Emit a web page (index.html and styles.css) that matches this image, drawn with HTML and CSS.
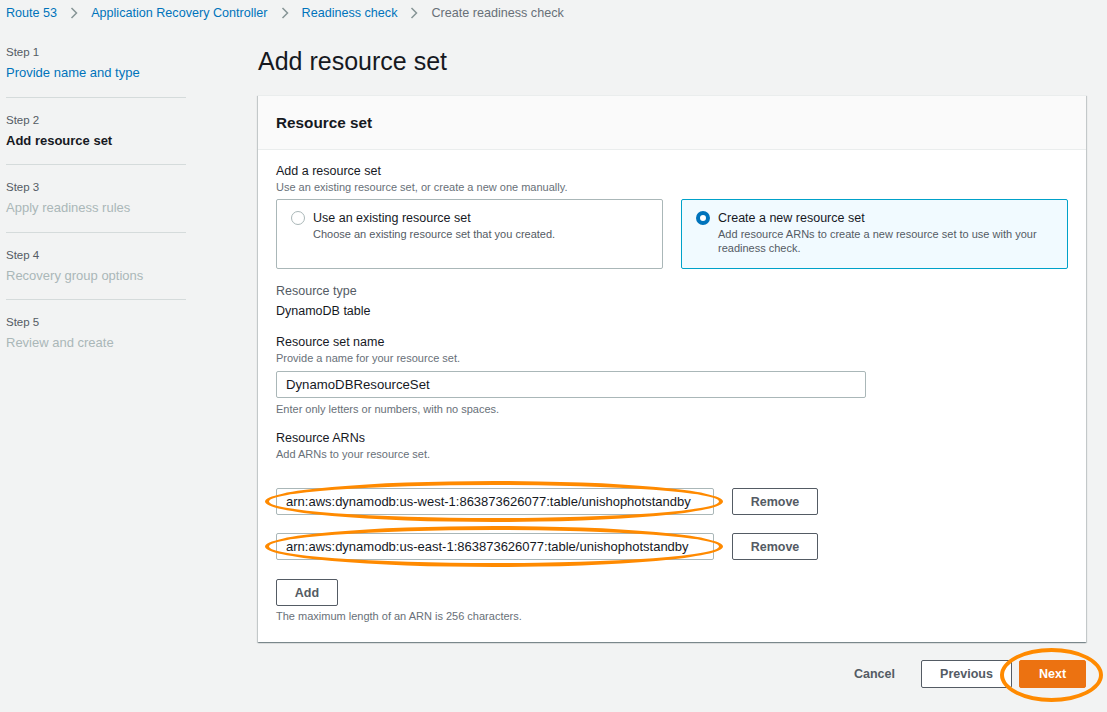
FILE: index.html
```html
<!DOCTYPE html>
<html lang="en">
<head>
<meta charset="utf-8">
<title>Add resource set</title>
<link rel="stylesheet" href="styles.css">
</head>
<body>
<nav class="breadcrumbs">
  <a class="crumb link">Route 53</a>
  <svg class="chev" viewBox="0 0 8 12" width="8" height="12"><polyline points="1.5,1 6.5,6 1.5,11" fill="none" stroke="#879596" stroke-width="1.5"/></svg>
  <a class="crumb link">Application Recovery Controller</a>
  <svg class="chev" viewBox="0 0 8 12" width="8" height="12"><polyline points="1.5,1 6.5,6 1.5,11" fill="none" stroke="#879596" stroke-width="1.5"/></svg>
  <a class="crumb link">Readiness check</a>
  <svg class="chev" viewBox="0 0 8 12" width="8" height="12"><polyline points="1.5,1 6.5,6 1.5,11" fill="none" stroke="#879596" stroke-width="1.5"/></svg>
  <span class="crumb current">Create readiness check</span>
</nav>

<div class="layout">
  <aside class="steps">
    <div class="step">
      <div class="step-num">Step 1</div>
      <div class="step-label link">Provide name and type</div>
    </div>
    <div class="step">
      <div class="step-num">Step 2</div>
      <div class="step-label active">Add resource set</div>
    </div>
    <div class="step">
      <div class="step-num">Step 3</div>
      <div class="step-label disabled">Apply readiness rules</div>
    </div>
    <div class="step">
      <div class="step-num">Step 4</div>
      <div class="step-label disabled">Recovery group options</div>
    </div>
    <div class="step last">
      <div class="step-num">Step 5</div>
      <div class="step-label disabled">Review and create</div>
    </div>
  </aside>

  <main class="main">
    <h1 class="page-title">Add resource set</h1>

    <section class="panel">
      <header class="panel-header">
        <h2 class="panel-title">Resource set</h2>
      </header>
      <div class="panel-body">
        <div class="field-label">Add a resource set</div>
        <div class="field-desc">Use an existing resource set, or create a new one manually.</div>
        <div class="tiles">
          <div class="tile">
            <span class="radio"></span>
            <div class="tile-text">
              <div class="tile-title">Use an existing resource set</div>
              <div class="tile-desc">Choose an existing resource set that you created.</div>
            </div>
          </div>
          <div class="tile selected">
            <span class="radio checked"></span>
            <div class="tile-text">
              <div class="tile-title">Create a new resource set</div>
              <div class="tile-desc">Add resource ARNs to create a new resource set to use with your readiness check.</div>
            </div>
          </div>
        </div>

        <div class="field-label muted spaced">Resource type</div>
        <div class="field-value">DynamoDB table</div>

        <div class="field-label spaced">Resource set name</div>
        <div class="field-desc">Provide a name for your resource set.</div>
        <div class="input name-input">DynamoDBResourceSet</div>
        <div class="field-hint">Enter only letters or numbers, with no spaces.</div>

        <div class="field-label spaced">Resource ARNs</div>
        <div class="field-desc">Add ARNs to your resource set.</div>

        <div class="arn-list">
          <div class="arn-row">
            <div class="arn-field">
              <div class="input arn-input">arn:aws:dynamodb:us-west-1:863873626077:table/unishophotstandby</div>
              <span class="ring ring-arn"></span>
            </div>
            <button class="btn">Remove</button>
          </div>
          <div class="arn-row">
            <div class="arn-field">
              <div class="input arn-input">arn:aws:dynamodb:us-east-1:863873626077:table/unishophotstandby</div>
              <span class="ring ring-arn"></span>
            </div>
            <button class="btn">Remove</button>
          </div>
        </div>
        <button class="btn add-btn">Add</button>
        <div class="field-hint last-hint">The maximum length of an ARN is 256 characters.</div>
      </div>
    </section>

    <div class="actions">
      <button class="btn link-btn">Cancel</button>
      <button class="btn">Previous</button>
      <span class="next-wrap">
        <button class="btn primary">Next</button>
        <span class="ring ring-next"></span>
      </span>
    </div>
  </main>
</div>
</body>
</html>
```

FILE: styles.css
```css
* { box-sizing: border-box; }

body {
  margin: 0;
  background: #f2f3f3;
  font-family: "Liberation Sans", Arial, sans-serif;
  color: #16191f;
  width: 1107px;
  height: 712px;
  overflow: hidden;
}

.link { color: #0073bb; }

.breadcrumbs {
  display: flex;
  align-items: center;
  gap: 13px;
  padding: 3px 6px 0;
  height: 23px;
  font-size: 12.6px;
  line-height: 20px;
}
.crumb.current { color: #687078; }
.chev { display: block; }

.layout {
  display: grid;
  grid-template-columns: 180px 828px;
  column-gap: 72px;
  padding: 21px 0 0 6px;
}

/* steps nav */
.steps { display: flex; flex-direction: column; }
.step {
  padding: 14px 0 14px;
  border-bottom: 1px solid #d5dbdb;
}
.step:first-child { padding-top: 0; }
.step:nth-child(2) { padding-bottom: 13px; }
.step:nth-child(4) { padding-bottom: 13px; }
.step.last { border-bottom: none; }
.step-num {
  font-size: 11.5px;
  line-height: 16px;
  color: #545b64;
}
.step-label {
  margin-top: 3px;
  font-size: 13px;
  line-height: 20px;
}
.step-label.active { font-weight: bold; color: #16191f; }
.step-label.disabled { color: #aab7b8; }

/* main */
.main { display: flex; flex-direction: column; }
.page-title {
  margin: 2px 0 0;
  font-size: 25px;
  line-height: 30px;
  font-weight: normal;
  color: #16191f;
}

.panel {
  margin-top: 19px;
  background: #fff;
  border-top: 1px solid #eaeded;
  box-shadow: 0 1px 1px 0 rgba(0, 28, 36, 0.3), 1px 1px 1px 0 rgba(0, 28, 36, 0.15), -1px 1px 1px 0 rgba(0, 28, 36, 0.15);
}
.panel-header {
  height: 54px;
  display: flex;
  align-items: center;
  padding: 0 18px;
  background: #fafafa;
  border-bottom: 1px solid #eaeded;
}
.panel-title {
  margin: 0;
  font-size: 15.3px;
  font-weight: bold;
  color: #16191f;
}
.panel-body {
  padding: 12px 18px 19px;
  display: flex;
  flex-direction: column;
  align-items: flex-start;
}

.field-label {
  font-size: 12.5px;
  line-height: 18px;
  color: #16191f;
}
.field-label.muted { color: #545b64; }
.field-label.spaced { margin-top: 13px; }
.field-value {
  margin-top: 2px;
  font-size: 12.5px;
  line-height: 18px;
}
.field-desc, .field-hint {
  font-size: 11px;
  line-height: 14px;
  color: #687078;
}
.field-hint { margin-top: 4px; }
.field-hint.last-hint { margin-top: 3px; }

.tiles {
  margin-top: 5px;
  display: grid;
  grid-template-columns: 387px 387px;
  column-gap: 18px;
  width: 100%;
}
.tile {
  height: 70px;
  border: 1px solid #aab7b8;
  border-radius: 2px;
  display: flex;
  align-items: flex-start;
  gap: 8px;
  padding: 9px 14px;
}
.tile.selected {
  background: #f1faff;
  border-color: #00a1c9;
}
.radio {
  flex: none;
  width: 14px;
  height: 14px;
  margin-top: 2px;
  border-radius: 50%;
  border: 1px solid #aab7b8;
  background: #fff;
}
.radio.checked {
  border: 4px solid #0073bb;
}
.tile-title {
  font-size: 12.5px;
  line-height: 18px;
  color: #16191f;
}
.tile-desc {
  font-size: 11px;
  line-height: 14px;
  color: #545b64;
}

.input {
  height: 27px;
  border: 1px solid #aab7b8;
  border-radius: 2px;
  background: #fff;
  font-size: 13.2px;
  line-height: 25px;
  padding: 0 9px;
  color: #16191f;
  white-space: nowrap;
  overflow: hidden;
}
.name-input { margin-top: 6px; width: 590px; }

.arn-list {
  margin-top: 27px;
  display: flex;
  flex-direction: column;
  gap: 18px;
}
.arn-row {
  display: flex;
  align-items: center;
  gap: 18px;
}
.arn-field { position: relative; }
.arn-input { width: 438px; font-size: 13px; }

.btn {
  font-family: inherit;
  font-size: 12.5px;
  font-weight: bold;
  color: #545b64;
  background: #fff;
  border: 1px solid #545b64;
  border-radius: 2px;
  height: 27px;
  padding: 0 18px;
  cursor: pointer;
}
.arn-row .btn { width: 86px; padding: 0; }
.add-btn { margin-top: 19px; width: 62px; padding: 0; }

.actions {
  margin-top: 18px;
  display: flex;
  justify-content: flex-end;
  gap: 7px;
}
.actions .btn { height: 28px; }
.link-btn {
  border-color: transparent;
  background: transparent;
  padding: 0 18px 0 20px;
}
.actions .btn:nth-child(2) { width: 91px; padding: 0; }
.next-wrap { position: relative; display: block; }
.primary {
  background: #ec7211;
  border-color: #ec7211;
  color: #fff;
  width: 67px;
  padding: 0;
  display: block;
}

/* annotation rings */
.ring {
  position: absolute;
  border: 4px solid #ff8a00;
  border-radius: 50%;
  pointer-events: none;
}
.ring-arn { left: -11px; top: -7px; right: -9px; bottom: -7px; }
.ring-next { left: -19px; top: -12px; right: -17px; bottom: -14px; }
```
